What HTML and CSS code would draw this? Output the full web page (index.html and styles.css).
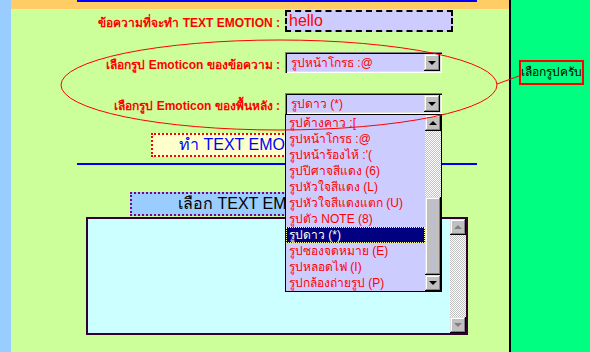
FILE: index.html
```html
<!DOCTYPE html>
<html lang="th">
<head>
    <meta charset="UTF-8">
    <title>TEXT EMOTION</title>
    <link rel="stylesheet" href="styles.css">
</head>
<body>
<div class="page">
    <div class="leftbar"></div>

    <div class="main">
        <div class="topband"><div class="bluebar"></div></div>

        <div class="row row-text">
            <label class="lbl">ข้อความที่จะทำ TEXT EMOTION :</label>
            <div class="textbox">hello</div>
        </div>

        <div class="row row-face">
            <label class="lbl">เลือกรูป Emoticon ของข้อความ :</label>
            <div class="combo">
                <span class="combo-val">รูปหน้าโกรธ :@</span>
                <span class="w98btn combo-btn"><i class="tri-down"></i></span>
            </div>
        </div>

        <div class="row row-bg">
            <label class="lbl">เลือกรูป Emoticon ของพื้นหลัง :</label>
            <div class="combo">
                <span class="combo-val">รูปดาว (*)</span>
                <span class="w98btn combo-btn"><i class="tri-down"></i></span>

                <!-- รายการที่เปิดค้างไว้ -->
                <div class="droplist">
                    <ul class="items">
                        <li>รูปค้างคาว :[</li>
                        <li>รูปหน้าโกรธ :@</li>
                        <li>รูปหน้าร้องไห้ :'(</li>
                        <li>รูปปีศาจสีแดง (6)</li>
                        <li>รูปหัวใจสีแดง (L)</li>
                        <li>รูปหัวใจสีแดงแตก (U)</li>
                        <li>รูปตัว NOTE (8)</li>
                        <li class="sel">รูปดาว (*)</li>
                        <li>รูปซองจดหมาย (E)</li>
                        <li>รูปหลอดไฟ (I)</li>
                        <li>รูปกล้องถ่ายรูป (P)</li>
                    </ul>
                    <div class="vbar list-bar">
                        <span class="w98btn sb-btn"><i class="tri-up"></i></span>
                        <span class="track track-top"></span>
                        <span class="w98btn thumb"></span>
                        <span class="w98btn sb-btn"><i class="tri-down"></i></span>
                    </div>
                </div>
            </div>
        </div>

        <div class="btn-make">ทำ TEXT EMOTION</div>
        <div class="rule"></div>
        <div class="btn-pick">เลือก TEXT EMOTION</div>

        <div class="output">
            <div class="vbar out-bar">
                <span class="w98btn sb-btn off"><i class="tri-up"></i></span>
                <span class="track"></span>
                <span class="w98btn sb-btn off"><i class="tri-down"></i></span>
            </div>
        </div>
    </div>

    <div class="divider"></div>

    <div class="side">
        <div class="callout">เลือกรูปครับ</div>
    </div>
</div>

<!-- วงรีแดงกับเส้นชี้ไปที่กล่องข้อความ -->
<svg class="ring" width="590" height="352" viewBox="0 0 590 352">
    <ellipse cx="279" cy="85" rx="218" ry="45" fill="none" stroke="#ff0000" stroke-width="1"/>
    <line x1="497" y1="84" x2="519" y2="76" stroke="#ff0000" stroke-width="1"/>
</svg>
</body>
</html>
```

FILE: styles.css
```css
body {
    margin: 0;
    font-family: "Liberation Sans", "Noto Sans", sans-serif;
}

.page {
    display: flex;
    width: 590px;
    height: 352px;
    overflow: hidden;
}

.leftbar {
    width: 11px;
    background-color: #99ccff;
}

.main {
    width: 498px;
    background-color: #ccff99;
    display: flex;
    flex-direction: column;
}

.topband {
    height: 9px;
    background-color: #ffcc66;
}

.bluebar {
    width: 400px;
    height: 2px;
    margin-left: 66px;
    background-color: #0000ff;
}

/* แถวฟอร์ม */
.row {
    display: grid;
    grid-template-columns: 269px 157px;
    column-gap: 5px;
    align-items: center;
}

.row-text { margin-top: 1px; }
.row-face { margin-top: 20px; }
.row-bg { margin-top: 20px; }

.lbl {
    text-align: right;
    color: #ff0000;
    font-weight: bold;
    font-size: 12px;
    line-height: 14px;
    padding-top: 4px;
    white-space: nowrap;
}

.textbox {
    width: 168px;
    height: 22px;
    box-sizing: border-box;
    border: 2px dashed #000;
    background-color: #ccccff;
    color: #ff0000;
    font-size: 16px;
    line-height: 18px;
    padding-left: 2px;
}

/* combo แบบ win98 */
.combo {
    position: relative;
    width: 157px;
    height: 21px;
    box-sizing: border-box;
    padding: 2px;
    background-color: #ccccff;
    box-shadow: inset 1px 1px #808080, inset 2px 2px #000, inset -1px -1px #fff, inset -2px -2px #dfdfdf;
    display: flex;
    align-items: center;
}

.combo-val {
    flex: 1;
    color: #ff0000;
    font-size: 12px;
    line-height: 16px;
    padding-left: 4px;
    white-space: nowrap;
}

.w98btn {
    display: flex;
    align-items: center;
    justify-content: center;
    background-color: #c0c0c0;
    box-shadow: inset -1px -1px #000, inset 1px 1px #dfdfdf, inset -2px -2px #808080, inset 2px 2px #fff;
    box-sizing: border-box;
}

.combo-btn {
    width: 16px;
    height: 17px;
}

.tri-down, .tri-up {
    display: block;
    width: 0;
    height: 0;
    border-left: 4px solid transparent;
    border-right: 4px solid transparent;
}

.tri-down { border-top: 4px solid #000; }
.tri-up { border-bottom: 4px solid #000; }

.off .tri-down { border-top-color: #808080; }
.off .tri-up { border-bottom-color: #808080; }

.droplist {
    position: absolute;
    left: 0;
    top: 21px;
    width: 157px;
    height: 178px;
    box-sizing: border-box;
    border: 1px solid #000;
    background-color: #ccccff;
    display: flex;
    z-index: 5;
}

.items {
    list-style: none;
    margin: 0;
    padding: 0;
    flex: 1;
}

.items li {
    height: 16px;
    line-height: 16px;
    padding-left: 3px;
    font-size: 12px;
    color: #ff0000;
    white-space: nowrap;
}

.items li.sel {
    background-color: #000080;
    color: #fff;
    outline: 1px dotted #ffff99;
    outline-offset: -1px;
}

.vbar {
    width: 16px;
    display: flex;
    flex-direction: column;
}

.sb-btn {
    height: 16px;
    flex: none;
}

.track {
    flex: 1;
    background-color: #fff;
    background-image: repeating-conic-gradient(#c0c0c0 0 25%, #fff 0 50%);
    background-size: 2px 2px;
}

.track-top {
    flex: none;
    height: 66px;
}

.thumb {
    height: 78px;
    background-color: #c0c0c0;
    background-image: radial-gradient(#b8b8ff 0.6px, transparent 0.9px);
    background-size: 5px 7px;
}

/* ปุ่ม */
.btn-make {
    width: 200px;
    height: 24px;
    box-sizing: border-box;
    margin-top: 19px;
    margin-left: 140px;
    padding-left: 26px;
    border: 2px dotted #ff0000;
    background-color: #ffffcc;
    color: #0000ff;
    font-size: 16px;
    line-height: 20px;
    white-space: nowrap;
}

.rule {
    width: 400px;
    height: 2px;
    margin-top: 6px;
    margin-left: 66px;
    background-color: #0000ff;
}

.btn-pick {
    width: 246px;
    height: 24px;
    box-sizing: border-box;
    margin-top: 27px;
    margin-left: 119px;
    padding-left: 46px;
    border: 2px dotted #800080;
    background-color: #99ccff;
    color: #000;
    font-size: 16px;
    line-height: 20px;
    white-space: nowrap;
}

.output {
    width: 382px;
    height: 118px;
    box-sizing: border-box;
    margin-top: 1px;
    margin-left: 75px;
    border: 2px solid #330033;
    background-color: #ccffff;
    display: flex;
    justify-content: flex-end;
}

.divider {
    width: 2px;
    background-color: #000;
}

.side {
    flex: 1;
    background-color: #00ff80;
}

.callout {
    width: 65px;
    height: 25px;
    box-sizing: border-box;
    margin-top: 60px;
    margin-left: 8px;
    border: 2px solid #ff0000;
    font-size: 12px;
    line-height: 21px;
    text-align: center;
    white-space: nowrap;
    color: #000;
}

.ring {
    position: absolute;
    left: 0;
    top: 0;
    pointer-events: none;
    z-index: 10;
}
```
